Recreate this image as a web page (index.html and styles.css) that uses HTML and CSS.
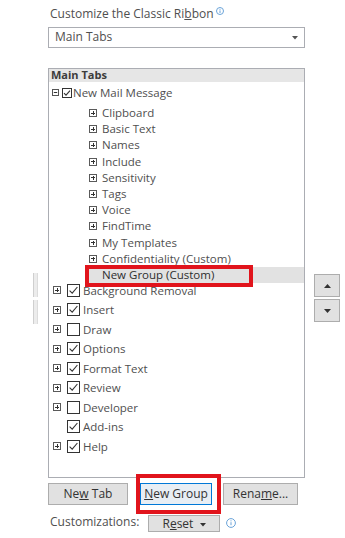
FILE: index.html
```html
<!DOCTYPE html>
<html lang="en">
<head>
    <meta charset="UTF-8">
    <meta name="viewport" content="width=device-width, initial-scale=1.0">
    <title>Customize the Classic Ribbon</title>
    <link rel="stylesheet" href="styles.css">
</head>
<body>
    <div class="page">
        <div class="title">Customize the Classic Ri<u>b</u>bon<svg class="info" width="8" height="8" viewBox="0 0 8 8"><circle cx="4" cy="4" r="3.5" fill="none" stroke="#6aa3d8"/><path d="M4 3.4v2.6" stroke="#6aa3d8"/><circle cx="4" cy="2.2" r=".55" fill="#6aa3d8"/></svg></div>

        <div class="select">
            <span>Main Tabs</span>
            <svg width="6" height="4" viewBox="0 0 6 4"><path d="M0 0h6L3 3.5z" fill="#555"/></svg>
        </div>

        <div class="middle">
            <div class="left-strip">
                <span class="strip"></span>
                <span class="strip"></span>
            </div>

            <div class="listbox">
                <div class="list-head">Main Tabs</div>

                <div class="row row-open">
                    <svg class="exp-sm" width="7" height="7" viewBox="0 0 7 7"><rect x=".5" y=".5" width="6" height="6" fill="#fff" stroke="#555"/><path d="M1.8 3.5h3.4" stroke="#333"/></svg>
                    <svg class="chk-sm" width="10" height="10" viewBox="0 0 10 10"><rect x=".5" y=".5" width="9" height="9" fill="#fff" stroke="#333"/><path d="M2 5.2l2 2L8 2.6" fill="none" stroke="#333" stroke-width="1.1"/></svg>
                    <span>New Mail Message</span>
                </div>

                <div class="nested">
                    <div class="sub"><span class="plus8"></span><span>Clipboard</span></div>
                    <div class="sub"><span class="plus8"></span><span>Basic Text</span></div>
                    <div class="sub"><span class="plus8"></span><span>Names</span></div>
                    <div class="sub"><span class="plus8"></span><span>Include</span></div>
                    <div class="sub"><span class="plus8"></span><span>Sensitivity</span></div>
                    <div class="sub"><span class="plus8"></span><span>Tags</span></div>
                    <div class="sub"><span class="plus8"></span><span>Voice</span></div>
                    <div class="sub"><span class="plus8"></span><span>FindTime</span></div>
                    <div class="sub"><span class="plus8"></span><span>My Templates</span></div>
                    <div class="sub"><span class="plus8"></span><span>Confidentiality (Custom)</span></div>
                    <div class="sub selected"><span class="spacer8"></span><span>New Group (Custom)</span><span class="callout"></span></div>
                </div>

                <div class="row"><span class="plus"></span><span class="chk on"></span><span>Background Removal</span></div>
                <div class="row"><span class="plus"></span><span class="chk on"></span><span>Insert</span></div>
                <div class="row"><span class="plus"></span><span class="chk"></span><span>Draw</span></div>
                <div class="row"><span class="plus"></span><span class="chk on"></span><span>Options</span></div>
                <div class="row"><span class="plus"></span><span class="chk on"></span><span>Format Text</span></div>
                <div class="row"><span class="plus"></span><span class="chk on"></span><span>Review</span></div>
                <div class="row"><span class="plus"></span><span class="chk"></span><span>Developer</span></div>
                <div class="row"><span class="spacer"></span><span class="chk on"></span><span>Add-ins</span></div>
                <div class="row"><span class="plus"></span><span class="chk on"></span><span>Help</span></div>
            </div>

            <div class="move-btns">
                <button class="move"><svg width="7" height="4" viewBox="0 0 7 4"><path d="M0 4h7L3.5 0z" fill="#333"/></svg></button>
                <button class="move"><svg width="7" height="4" viewBox="0 0 7 4"><path d="M0 0h7L3.5 4z" fill="#333"/></svg></button>
            </div>
        </div>

        <div class="actions">
            <button class="btn btn-tab">Ne<u>w</u> Tab</button>
            <button class="btn btn-group"><u>N</u>ew Group<span class="callout callout-btn"></span></button>
            <button class="btn btn-rename">Rena<u>m</u>e...</button>
        </div>

        <div class="custom-row">
            <span class="custom-label">Customizations:</span>
            <button class="btn btn-reset">R<u>e</u>set <svg width="6" height="4" viewBox="0 0 6 4"><path d="M0 0h6L3 3.5z" fill="#333"/></svg></button>
            <svg class="info-reset" width="10" height="10" viewBox="0 0 10 10"><circle cx="5" cy="5" r="4.4" fill="none" stroke="#6aa3d8"/><path d="M5 4.2v3" stroke="#6aa3d8"/><circle cx="5" cy="2.8" r=".6" fill="#6aa3d8"/></svg>
        </div>
    </div>
</body>
</html>
```

FILE: styles.css
```css
body, html {
    margin: 0;
    padding: 0;
    background: #fff;
    font-family: 'Open Sans', 'Noto Sans', sans-serif;
    color: #4f4f4f;
}
.page {
    padding-top: 6px;
}
.title {
    margin-left: 50px;
    font-size: 12px;
    line-height: 16px;
    height: 16px;
}
.info {
    margin-left: 2px;
    vertical-align: 3px;
}
.select {
    margin: 5px 0 0 48px;
    width: 257px;
    height: 21px;
    box-sizing: border-box;
    border: 1px solid #abadb3;
    padding: 0 6px 2px 6px;
    font-size: 12px;
    line-height: 17px;
    display: flex;
    justify-content: space-between;
    align-items: center;
}
.select svg {
    margin-top: 2px;
}
.middle {
    display: flex;
    margin-top: 20px;
}
.left-strip {
    width: 48px;
    flex: none;
    padding-top: 205px;
    box-sizing: border-box;
    display: flex;
    flex-direction: column;
    gap: 3px;
}
.strip {
    margin-left: 33px;
    width: 5px;
    height: 24px;
    box-sizing: border-box;
    background: #ececec;
    border-left: 1px solid #cfcfcf;
    border-right: 1px solid #dcdcdc;
}
.listbox {
    width: 257px;
    height: 410px;
    box-sizing: border-box;
    border: 1px solid #abadb3;
    flex: none;
    font-size: 11.5px;
}
.list-head {
    background: #e6e6e6;
    font-weight: 700;
    font-size: 11px;
    line-height: 12px;
    padding: 0 0 1px 2px;
    color: #3c3c3c;
}
.row {
    display: flex;
    align-items: center;
    height: 19.5px;
    line-height: 19.5px;
    padding-left: 4px;
    white-space: nowrap;
}
.row-open {
    height: 21px;
    line-height: 21px;
    margin-bottom: 2px;
    padding-left: 3px;
}
.exp-sm {
    margin-right: 3px;
}
.chk-sm {
    margin-right: 1px;
}
.plus, .spacer {
    width: 8px;
    height: 8px;
    margin-right: 6px;
    flex: none;
}
.plus, .plus8 {
    box-sizing: border-box;
    border: 1px solid #5a5a5a;
    background:
        linear-gradient(#333, #333) center / 4px 1px no-repeat,
        linear-gradient(#333, #333) center / 1px 4px no-repeat,
        #fff;
}
.chk {
    width: 13px;
    height: 13px;
    box-sizing: border-box;
    border: 1px solid #333;
    margin-right: 3px;
    flex: none;
    background: #fff;
}
.chk.on {
    background: #fff url("data:image/svg+xml,%3Csvg xmlns='http://www.w3.org/2000/svg' width='11' height='11' viewBox='0 0 11 11'%3E%3Cpath d='M1.6 5.6l2.6 2.6 5.2-6.2' fill='none' stroke='%23333' stroke-width='1.1'/%3E%3C/svg%3E") center no-repeat;
}
.nested {
    margin-bottom: -2.4px;
}
.sub {
    display: flex;
    align-items: center;
    height: 16.2px;
    line-height: 16.2px;
    margin-left: 39px;
    padding-left: 1px;
    white-space: nowrap;
}
.plus8, .spacer8 {
    width: 8px;
    height: 8px;
    margin-right: 5px;
    flex: none;
}
.sub.selected {
    background: #e2e2e2;
    color: #2e2e2e;
    position: relative;
}
.callout {
    position: absolute;
    left: -3px;
    top: -2px;
    width: 168px;
    height: 22px;
    box-sizing: border-box;
    border: 4px solid #e1141c;
    z-index: 2;
}
.move-btns {
    margin-left: 9px;
    padding-top: 206px;
    display: flex;
    flex-direction: column;
    gap: 2px;
}
.move {
    width: 26px;
    height: 23px;
    padding: 0;
    background: #e1e1e1;
    border: 1px solid #adadad;
    display: flex;
    align-items: center;
    justify-content: center;
}
.actions {
    display: flex;
    margin: 5px 0 0 48px;
}
.btn {
    height: 22px;
    box-sizing: border-box;
    padding: 0;
    background: #e1e1e1;
    border: 1px solid #adadad;
    font-family: 'Open Sans', 'Noto Sans', sans-serif;
    font-size: 12px;
    line-height: 20px;
    color: #333;
    text-align: center;
}
.btn-tab {
    width: 80px;
}
.btn-group {
    width: 72px;
    margin-left: 12px;
    border-color: #0078d7;
    background: #e8eef4;
    position: relative;
}
.callout-btn {
    left: -5px;
    top: -10px;
    width: 85px;
    height: 40px;
}
.btn-rename {
    width: 75px;
    margin-left: 11px;
}
.custom-row {
    display: flex;
    align-items: flex-start;
    margin: 10px 0 0 50px;
    font-size: 12px;
}
.custom-label {
    line-height: 14px;
    width: 98px;
}
.btn-reset {
    width: 72px;
    height: 17px;
    line-height: 15px;
}
.btn-reset svg {
    margin-left: 3px;
    margin-bottom: 1px;
}
.info-reset {
    margin: 3px 0 0 6px;
}
```
